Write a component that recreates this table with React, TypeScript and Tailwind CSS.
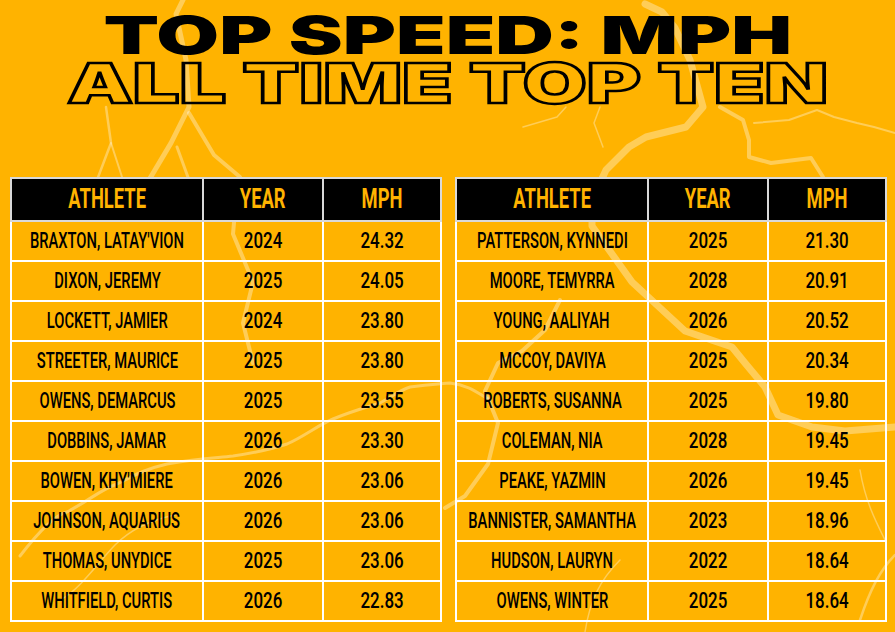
import React from "react";

type Row = [string, string, string];

const leftRows: Row[] = [
  ["BRAXTON, LATAY'VION", "2024", "24.32"],
  ["DIXON, JEREMY", "2025", "24.05"],
  ["LOCKETT, JAMIER", "2024", "23.80"],
  ["STREETER, MAURICE", "2025", "23.80"],
  ["OWENS, DEMARCUS", "2025", "23.55"],
  ["DOBBINS, JAMAR", "2026", "23.30"],
  ["BOWEN, KHY'MIERE", "2026", "23.06"],
  ["JOHNSON, AQUARIUS", "2026", "23.06"],
  ["THOMAS, UNYDICE", "2025", "23.06"],
  ["WHITFIELD, CURTIS", "2026", "22.83"],
];

const rightRows: Row[] = [
  ["PATTERSON, KYNNEDI", "2025", "21.30"],
  ["MOORE, TEMYRRA", "2028", "20.91"],
  ["YOUNG, AALIYAH", "2026", "20.52"],
  ["MCCOY, DAVIYA", "2025", "20.34"],
  ["ROBERTS, SUSANNA", "2025", "19.80"],
  ["COLEMAN, NIA", "2028", "19.45"],
  ["PEAKE, YAZMIN", "2026", "19.45"],
  ["BANNISTER, SAMANTHA", "2023", "18.96"],
  ["HUDSON, LAURYN", "2022", "18.64"],
  ["OWENS, WINTER", "2025", "18.64"],
];

// faint lightning drawn behind everything
const Lightning = () => (
  <svg
    className="absolute inset-0 w-full h-full"
    viewBox="0 0 895 632"
    fill="none"
    stroke="#ffffff"
    strokeOpacity="0.34"
    strokeLinejoin="round"
    strokeLinecap="round"
  >
    <path d="M183 0 L176 14 L186 60 L189 107 L171 143 L149 180 L140 205" strokeWidth="5" />
    <path d="M189 113 L214 155 L240 177 L236 200 L233 234 L253 282 L243 323 L253 363" strokeWidth="4" />
    <path d="M177 147 L189 180 L195 215" strokeWidth="3" />
    <path d="M106 107 L111 143 L97 180 L85 215" strokeWidth="2.5" />
    <path d="M111 143 L123 180 L128 205" strokeWidth="2" />
    <path d="M20 556 C40 530 55 515 67 512 C90 500 100 490 117 484 C140 472 150 468 167 464 C200 458 215 458 233 456 C260 452 275 448 287 444 C305 436 318 425 333 419 C355 410 365 408 380 403 C395 395 400 390 410 387 C430 384 440 384 450 383 C470 385 480 395 490 400" strokeWidth="3" />
    <path d="M60 600 C80 590 100 560 115 545 C130 530 150 520 175 515" strokeWidth="1.5" />
    <path d="M645 4 L662 12 L675 28 L690 60 L703 107 L686 127 L646 137 L629 147 L606 170 L592 200 L592 226 L632 282 L658 306 L685 331 L732 347 L745 363 L765 387 L778 415 L812 427 L845 431 L895 427" strokeWidth="7" />
    <path d="M720 107 L743 120 L749 140 L749 157 L771 163 L811 158 L823 177 L826 200" strokeWidth="4" />
    <path d="M754 123 L789 120 L817 110 L834 117 L857 123 L874 127 L895 133" strokeWidth="2" />
    <path d="M600 107 L594 123 L603 147" strokeWidth="1.5" />
    <path d="M566 107 L557 117 L523 127" strokeWidth="1.5" />
    <path d="M445 508 L465 496 L488 464 L498 423 L485 391 L498 363 L522 351 L545 330 L560 300" strokeWidth="4" />
    <path d="M860 620 C870 590 880 570 895 555" strokeWidth="2.5" />
    <path d="M860 470 C865 500 875 520 885 540" strokeWidth="1.5" />
    <path d="M620 560 C600 580 590 600 585 632" strokeWidth="1.5" />
  </svg>
);

const Cell = ({ text, scale }: { text: string; scale: string }) => (
  <td className="h-[40px] border-2 border-white p-0 font-medium text-[22px] leading-none text-black">
    <div className="flex justify-center whitespace-nowrap">
      <span className={`shrink-0 inline-block ${scale}`}>{text}</span>
    </div>
  </td>
);

const DataTable = ({ rows }: { rows: Row[] }) => (
  <table className="table-fixed border-collapse border-2 border-white w-[430px]">
    <colgroup>
      <col className="w-[192px]" />
      <col className="w-[120px]" />
      <col className="w-[118px]" />
    </colgroup>
    <thead>
      <tr className="bg-black">
        {["ATHLETE", "YEAR", "MPH"].map((h) => (
          <th key={h} className="h-[43px] border-2 border-[#d9d9d9] p-0 text-center font-bold text-[27px] leading-none text-[#FFB300]">
            <span className="inline-block scale-x-[0.68]">{h}</span>
          </th>
        ))}
      </tr>
    </thead>
    <tbody>
      {rows.map((r) => (
        <tr key={r[0]}>
          <Cell text={r[0]} scale="scale-x-[0.67]" />
          <Cell text={r[1]} scale="scale-x-[0.77]" />
          <Cell text={r[2]} scale="scale-x-[0.77]" />
        </tr>
      ))}
    </tbody>
  </table>
);

export default function App() {
  return (
    <div className="relative w-[895px] h-[632px] overflow-hidden bg-[#FFB300] font-['Roboto',sans-serif]">
      <Lightning />
      <div className="relative flex flex-col items-center pt-[15px]">
        <h1 className="h-[46px] font-['Inter',sans-serif] font-black text-[52px] leading-[42px] text-black whitespace-nowrap">
          <span className="inline-block scale-x-[1.56]">TOP SPEED: MPH</span>
        </h1>
        <h2 className="h-[48px] font-['Inter',sans-serif] font-black text-[55px] leading-[44px] text-transparent whitespace-nowrap [-webkit-text-stroke:2.5px_#000]">
          <span className="inline-block scale-x-[1.5]">ALL TIME TOP TEN</span>
        </h2>
      </div>
      <div className="relative flex gap-[13px] pl-[10px] mt-[68px]">
        <DataTable rows={leftRows} />
        <DataTable rows={rightRows} />
      </div>
    </div>
  );
}
